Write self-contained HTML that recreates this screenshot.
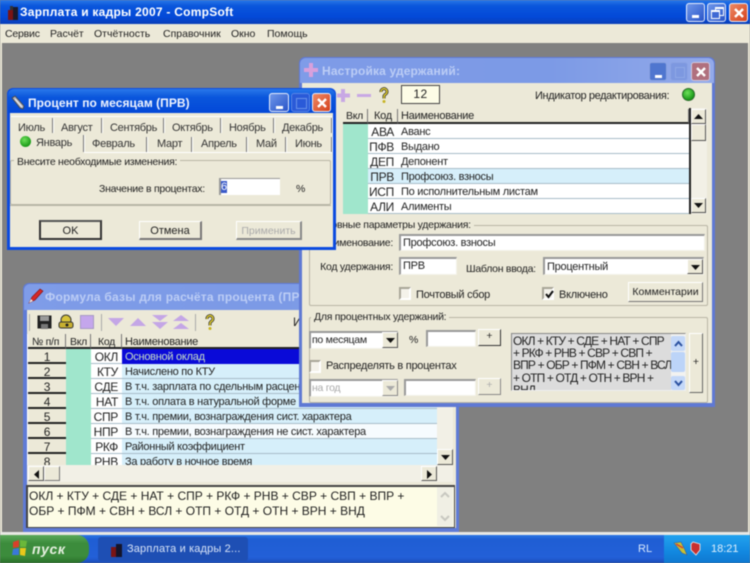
<!DOCTYPE html>
<html><head><meta charset="utf-8"><style>
html,body{margin:0;padding:0;background:#808080}
#r{position:relative;width:750px;height:563px;overflow:hidden;background:#808080;font:10.5px "Liberation Sans","DejaVu Sans",sans-serif;color:#222;filter:blur(.45px);letter-spacing:-.27px}
#r div,#r span.a,#r svg{position:absolute}
.t{white-space:nowrap;line-height:14px}
.m{letter-spacing:0}
.b{border:1px solid #fff;border-right-color:#777;border-bottom-color:#777;background:#ece9d8;box-sizing:border-box;text-align:center;white-space:nowrap;letter-spacing:0}
.i{background:#fff;box-sizing:border-box;border:1px solid #999;border-right-color:#f4f2e8;border-bottom-color:#f4f2e8;border-top-width:2px;border-left-width:2px;white-space:nowrap;padding-left:2px}
.g{border:1px solid #b8b5a5;border-radius:2px;box-sizing:border-box}
.l{background:#ece9d8;padding:0 3px;white-space:nowrap;line-height:13px}
.h{background:#ece9d8;border-right:1px solid #777;border-bottom:2px solid #222;box-sizing:border-box;line-height:15px;padding-left:3px;white-space:nowrap;overflow:hidden}
.c{box-sizing:border-box;border-bottom:1px solid #a8bcc8;line-height:16px;font-size:11px;white-space:nowrap;overflow:hidden}
.g3 .c,.g3 .h{line-height:17px}
.n{left:1px;width:38px;height:15px;background:#ece9d8;border-bottom:2px solid #222;text-align:center;font-size:12px}
.k{width:31px;height:15px;text-align:right;padding-right:4px;font-size:12px;background:#fff;letter-spacing:-.3px}
.tb{border-radius:3px;box-sizing:border-box;border:1px solid #e8eefc}
.cl{background:linear-gradient(135deg,#ee8a66,#d5421c)}
.mn{background:linear-gradient(135deg,#6f97ea,#2a55c8)}
.cli{background:#b0707e}.mni{background:#4f76cf}
.ck{width:12px;height:13px;background:#f4f2ea;border:2px solid #a8a598;border-right-color:#fff;border-bottom-color:#fff;box-sizing:border-box}
.tab{white-space:nowrap;line-height:14px;font-size:11px;color:#333}
.sp{width:1px;background:#777;border-right:1px solid #fff}
.f{font-size:12px;color:#222;white-space:nowrap;line-height:16px;letter-spacing:0}
</style></head><body><div id="r">

<!-- main chrome -->
<div style="left:0;top:0;width:750px;height:24px;background:linear-gradient(#2a78e8 0,#0a56dc 25%,#0349d8 70%,#0a3fb8 100%)"></div>
<div style="left:0;top:24px;width:750px;height:19px;background:#ece9d8"></div>
<div style="left:0;top:43px;width:2px;height:490px;background:#ece9d8"></div>
<div style="left:748px;top:43px;width:2px;height:490px;background:#ece9d8"></div>
<div style="left:0;top:532px;width:750px;height:3px;background:#e8e8e4"></div>

<svg style="left:5px;top:4px" width="16" height="17" viewBox="0 0 16 17"><rect x="3" y="6" width="5" height="10" fill="#7a1414"/><rect x="8" y="3" width="5" height="13" fill="#1a1a2a"/><rect x="5" y="2" width="3" height="4" fill="#333"/></svg>
<div class="t" style="left:20px;top:4px;font:bold 12px/16px 'Liberation Sans',sans-serif;color:#fff;letter-spacing:.25px">Зарплата и кадры 2007 - CompSoft</div>
<div class="t m" style="left:5px;top:27px;letter-spacing:-.2px">Сервис</div>
<div class="t m" style="left:50px;top:27px">Расчёт</div>
<div class="t m" style="left:94px;top:27px">Отчётность</div>
<div class="t m" style="left:163px;top:27px">Справочник</div>
<div class="t m" style="left:231px;top:27px">Окно</div>
<div class="t m" style="left:267px;top:27px">Помощь</div>
<div class="tb mn" style="left:686px;top:3px;width:19px;height:19px"><div style="left:5px;top:11px;width:7px;height:3px;background:#fff"></div></div>
<div class="tb mn" style="left:707px;top:3px;width:19px;height:19px"><div style="left:7px;top:3px;width:7px;height:6px;border:1px solid #fff;border-top-width:2px"></div><div style="left:3px;top:6px;width:7px;height:6px;border:1px solid #fff;border-top-width:2px;background:#3f69d4"></div></div>
<div class="tb cl" style="left:729px;top:3px;width:19px;height:19px"><svg style="left:3px;top:3px" width="12" height="12"><path d="M2 2L10 10M10 2L2 10" stroke="#fff" stroke-width="2.4"/></svg></div>

<!-- Формула window -->
<div style="left:23px;top:283px;width:436px;height:249px;background:#5f7bd6;border-radius:6px 6px 0 0"></div>
<div style="left:24px;top:284px;width:434px;height:26px;background:linear-gradient(90deg,#7f9ce8,#7c9ae6 60%,#93aaea);border-radius:6px 6px 0 0"></div>
<div style="left:27px;top:310px;width:429px;height:218px;background:#ece9d8"></div>
<svg style="left:27px;top:287px" width="17" height="18"><path d="M2 16L5 10L13 2L16 4L8 13Z" fill="#d62828" stroke="#7a1010" stroke-width=".6"/><path d="M2 16L4 12L6 14Z" fill="#eee"/></svg>
<div class="t" style="left:45px;top:290px;font:bold 12px/15px 'Liberation Sans',sans-serif;color:#bccdf5;letter-spacing:.22px">Формула базы для расчёта процента (ПРВ)</div>

<div style="left:29px;top:314px;width:1px;height:17px;background:#aaa"></div>
<svg style="left:37px;top:315px" width="15" height="14"><rect x=".5" y=".5" width="14" height="13" fill="#222"/><rect x="3" y="1" width="9" height="5" fill="#999"/><rect x="4" y="9" width="7" height="5" fill="#777"/></svg>
<svg style="left:58px;top:314px" width="16" height="16"><ellipse cx="8" cy="6" rx="5" ry="5" fill="#d8c43a" stroke="#333"/><rect x="1" y="8" width="14" height="6" rx="2" fill="#c8b030" stroke="#333"/><circle cx="9" cy="11" r="1.5" fill="#222"/></svg>
<div style="left:80px;top:315px;width:14px;height:14px;background:#c4a6ec;border:1px solid #a79ac4;box-sizing:border-box"></div>
<div style="left:101px;top:314px;width:1px;height:17px;background:#aaa"></div>
<svg style="left:108px;top:314px" width="84" height="16"><g fill="#c4a6e6"><path d="M0 4H16L8 12Z"/><path d="M22 12H38L30 4Z"/><path d="M44 1H60L52 7Z"/><path d="M44 8H60L52 15Z"/><path d="M65 15H81L73 9Z"/><path d="M65 7H81L73 1Z"/></g></svg>
<div style="left:195px;top:314px;width:1px;height:17px;background:#aaa"></div>
<svg style="left:204px;top:314px" width="12" height="17"><path d="M3 5A3 3 0 1 1 7 7.500L6 9V11.500" fill="none" stroke="#333" stroke-width="3"/><path d="M3 5A3 3 0 1 1 7 7.500L6 9V11.500" fill="none" stroke="#e0cc2a" stroke-width="1.500"/><circle cx="6" cy="14.500" r="1.500" fill="#c8b424"/></svg>
<div class="t" style="left:293px;top:315px;font-size:12px;color:#222">И</div>

<div class="g3" style="left:27px;top:334px;width:410px;height:131px;background:#fff;overflow:hidden">
 <div class="h" style="left:1px;top:0;width:38px;height:15px;padding-left:4px">№ п/п</div>
 <div class="h" style="left:39px;top:0;width:25px;height:15px;padding-left:4px">Вкл</div>
 <div class="h" style="left:64px;top:0;width:31px;height:15px;padding-left:7px">Код</div>
 <div class="h" style="left:95px;top:0;width:315px;height:15px;padding-left:3px;font-size:11px">Наименование</div>

 <div class="c n" style="top:15px">1</div>
 <div class="c n" style="top:30px">2</div>
 <div class="c n" style="top:45px">3</div>
 <div class="c n" style="top:60px">4</div>
 <div class="c n" style="top:75px">5</div>
 <div class="c n" style="top:90px">6</div>
 <div class="c n" style="top:105px">7</div>
 <div class="c n" style="top:120px;border:0">8</div>
 <div style="left:39px;top:15px;width:25px;height:116px;background:#a0e6cc"></div>

 <div class="c k" style="left:64px;top:15px">ОКЛ</div>
 <div class="c k" style="left:64px;top:30px">КТУ</div>
 <div class="c k" style="left:64px;top:45px">СДЕ</div>
 <div class="c k" style="left:64px;top:60px">НАТ</div>
 <div class="c k" style="left:64px;top:75px">СПР</div>
 <div class="c k" style="left:64px;top:90px">НПР</div>
 <div class="c k" style="left:64px;top:105px">РКФ</div>
 <div class="c k" style="left:64px;top:120px">РНВ</div>

 <div class="c" style="left:95px;top:15px;width:315px;height:15px;padding-left:3px;background:#0a0ad8;color:#c8e0c8;border:0">Основной оклад</div>
 <div class="c" style="left:95px;top:30px;width:315px;height:15px;padding-left:3px;background:#d6effa">Начислено по КТУ</div>
 <div class="c" style="left:95px;top:45px;width:315px;height:15px;padding-left:3px;background:#d6effa">В т.ч. зарплата по сдельным расценкам</div>
 <div class="c" style="left:95px;top:60px;width:315px;height:15px;padding-left:3px;background:#d6effa">В т.ч. оплата в натуральной форме</div>
 <div class="c" style="left:95px;top:75px;width:315px;height:15px;padding-left:3px;background:#d6effa">В т.ч. премии, вознаграждения сист. характера</div>
 <div class="c" style="left:95px;top:90px;width:315px;height:15px;padding-left:3px;background:#f6fbfe">В т.ч. премии, вознаграждения не сист. характера</div>
 <div class="c" style="left:95px;top:105px;width:315px;height:15px;padding-left:3px;background:#d6effa">Районный коэффициент</div>
 <div class="c" style="left:95px;top:120px;width:315px;height:15px;padding-left:3px;background:#d6effa">За работу в ночное время</div>
</div>
<div style="left:437px;top:334px;width:16px;height:131px;background:#f2f0e6"></div>
<div class="b" style="left:437px;top:449px;width:16px;height:16px;border-color:#fff #555 #555 #fff"><svg style="left:3px;top:5px" width="9" height="6"><path d="M0 0H9L4.500 5Z" fill="#111"/></svg></div>
<div style="left:27px;top:465px;width:426px;height:17px;background:#f2f0e6"></div>
<div class="b" style="left:28px;top:466px;width:16px;height:15px;border-color:#fff #555 #555 #fff"><svg style="left:5px;top:3px" width="6" height="9"><path d="M5 0V9L0 4.500Z" fill="#111"/></svg></div>
<div class="b" style="left:44px;top:466px;width:16px;height:15px"></div>
<div class="b" style="left:421px;top:466px;width:16px;height:15px;border-color:#fff #555 #555 #fff"><svg style="left:5px;top:3px" width="6" height="9"><path d="M0 0V9L5 4.500Z" fill="#111"/></svg></div>

<div style="left:26px;top:485px;width:429px;height:43px;background:#fdfce6;border:2px solid #444;border-right-width:1px;border-bottom-width:1px;box-sizing:border-box"></div>
<div class="f" style="left:29px;top:488px">ОКЛ + КТУ + СДЕ + НАТ + СПР + РКФ + РНВ + СВР + СВП + ВПР +</div>
<div class="f" style="left:29px;top:503px">ОБР + ПФМ + СВН + ВСЛ + ОТП + ОТД + ОТН + ВРН + ВНД</div>
<div style="left:437px;top:487px;width:16px;height:39px;background:#f0efe4"></div>
<svg style="left:439px;top:489px" width="12" height="35"><path d="M2 8L6 4L10 8" stroke="#c8c8c0" stroke-width="2" fill="none"/><path d="M2 27L6 31L10 27" stroke="#c8c8c0" stroke-width="2" fill="none"/></svg>

<!-- Настройка window -->
<div style="left:299px;top:57px;width:416px;height:350px;background:#5f79d4;border-radius:6px 6px 0 0"></div>
<div style="left:300px;top:58px;width:414px;height:25px;background:linear-gradient(90deg,#7f9ce8,#7c9ae6 60%,#93aaea);border-radius:6px 6px 0 0"></div>
<div style="left:302px;top:83px;width:410px;height:320px;background:#ece9d8"></div>
<svg style="left:304px;top:63px" width="14" height="14"><path d="M5 0H9V5H14V9H9V14H5V9H0V5H5Z" fill="#d8a0dc"/></svg>
<div class="t" style="left:322px;top:64px;font:bold 12px/15px 'Liberation Sans',sans-serif;color:#bccdf5;letter-spacing:.15px">Настройка удержаний:</div>
<div class="tb mni" style="left:649px;top:62px;width:18px;height:19px;border-color:#8aa2e0"><div style="left:5px;top:12px;width:7px;height:3px;background:#fff"></div></div>
<div class="tb" style="left:670px;top:62px;width:18px;height:19px;border-color:#8ca4e4;background:#7d98e0"><div style="left:4px;top:4px;width:8px;height:9px;border:1px solid #8fa8e6"></div></div>
<div class="tb cli" style="left:691px;top:62px;width:19px;height:19px;border-color:#d0c8dc"><svg style="left:3px;top:3px" width="12" height="12"><path d="M2 2L10 10M10 2L2 10" stroke="#fff" stroke-width="2.400"/></svg></div>

<svg style="left:337px;top:89px" width="36" height="13"><path d="M4 0H8V4.500H13V8.500H8V13H4V8.500H0V4.500H4Z" fill="#c8a8e4"/><rect x="20" y="5" width="14" height="3" fill="#c8a8e4"/></svg>
<svg style="left:378px;top:87px" width="12" height="17"><path d="M3 5A3 3 0 1 1 7 7.500L6 9V11.500" fill="none" stroke="#333" stroke-width="3"/><path d="M3 5A3 3 0 1 1 7 7.500L6 9V11.500" fill="none" stroke="#e0cc2a" stroke-width="1.500"/><circle cx="6" cy="14.500" r="1.500" fill="#c8b424"/></svg>
<div style="left:401px;top:85px;width:39px;height:19px;background:#fdfce6;border:1px solid #444;box-sizing:border-box;text-align:center;font-size:12px;line-height:17px;letter-spacing:.5px">12</div>
<div class="t" style="left:535px;top:89px;font-size:11px;letter-spacing:-.38px">Индикатор редактирования:</div>
<div style="left:682px;top:88px;width:13px;height:13px;border-radius:50%;background:radial-gradient(circle at 40% 35%,#6ee05a,#1a9a18 70%);border:1px solid #2a6a2a;box-sizing:border-box"></div>

<div class="h" style="left:343px;top:109px;width:25px;height:15px">Вкл</div>
<div class="h" style="left:368px;top:109px;width:30px;height:15px;padding-left:6px;font-size:11px">Код</div>
<div class="h" style="left:398px;top:109px;width:291px;height:15px;font-size:11px">Наименование</div>
<div style="left:343px;top:124px;width:25px;height:90px;background:#a0e6cc"></div>
<div class="c k" style="left:368px;top:124px;width:30px">АВА</div>
<div class="c k" style="left:368px;top:139px;width:30px">ПФВ</div>
<div class="c k" style="left:368px;top:154px;width:30px">ДЕП</div>
<div class="c k" style="left:368px;top:169px;width:30px;background:#d6effa">ПРВ</div>
<div class="c k" style="left:368px;top:184px;width:30px">ИСП</div>
<div class="c k" style="left:368px;top:199px;width:30px">АЛИ</div>
<div class="c" style="left:398px;top:124px;width:291px;height:15px;padding-left:3px;background:#fff">Аванс</div>
<div class="c" style="left:398px;top:139px;width:291px;height:15px;padding-left:3px;background:#fff">Выдано</div>
<div class="c" style="left:398px;top:154px;width:291px;height:15px;padding-left:3px;background:#fff">Депонент</div>
<div class="c" style="left:398px;top:169px;width:291px;height:15px;padding-left:3px;background:#d6effa">Профсоюз. взносы</div>
<div class="c" style="left:398px;top:184px;width:291px;height:15px;padding-left:3px;background:#fff">По исполнительным листам</div>
<div class="c" style="left:398px;top:199px;width:291px;height:15px;padding-left:3px;background:#fff">Алименты</div>
<div style="left:689px;top:108px;width:2px;height:106px;background:#222"></div>
<div style="left:691px;top:108px;width:16px;height:106px;background:#f2f0e6"></div>
<div class="b" style="left:691px;top:109px;width:15px;height:15px;border-color:#fff #555 #555 #fff"><svg style="left:2px;top:4px" width="9" height="6"><path d="M0 5H9L4.500 0Z" fill="#111"/></svg></div>
<div class="b" style="left:691px;top:124px;width:15px;height:17px;border-color:#fff #555 #555 #fff"></div>
<div class="b" style="left:691px;top:198px;width:15px;height:15px;border-color:#fff #555 #555 #fff"><svg style="left:2px;top:4px" width="9" height="6"><path d="M0 0H9L4.500 5Z" fill="#111"/></svg></div>

<div class="g" style="left:309px;top:225px;width:399px;height:81px"></div>
<div class="l" style="left:310px;top:219px">Основные параметры удержания:</div>
<div class="t" style="left:300px;top:236px;width:93px;text-align:right">Наименование:</div>
<div class="i" style="left:399px;top:234px;width:306px;height:17px;line-height:15px;font-size:11px">Профсоюз. взносы</div>
<div class="t" style="left:300px;top:260px;width:93px;text-align:right">Код удержания:</div>
<div class="i" style="left:399px;top:257px;width:58px;height:18px;line-height:15px;font-size:11px">ПРВ</div>
<div class="t" style="left:466px;top:262px">Шаблон ввода:</div>
<div class="i" style="left:543px;top:257px;width:161px;height:18px;line-height:16px;font-size:11px">Процентный</div>
<div class="b" style="left:687px;top:259px;width:16px;height:15px;border-color:#fff #555 #555 #fff"><svg style="left:3px;top:5px" width="9" height="6"><path d="M0 0H9L4.500 5Z" fill="#111"/></svg></div>
<div class="ck" style="left:399px;top:287px"></div>
<div class="t" style="left:416px;top:288px;font-size:11px">Почтовый сбор</div>
<div class="ck" style="left:542px;top:287px"><svg style="left:1px;top:1px" width="9" height="9"><path d="M1 4L3.500 7L8 1" stroke="#111" stroke-width="2" fill="none"/></svg></div>
<div class="t" style="left:559px;top:288px;font-size:11px">Включено</div>
<div class="b" style="left:628px;top:282px;width:75px;height:20px;line-height:19px;font-size:10.5px">Комментарии</div>

<div class="g" style="left:309px;top:317px;width:399px;height:86px"></div>
<div class="l" style="left:311px;top:311px">Для процентных удержаний:</div>
<div class="i" style="left:309px;top:331px;width:89px;height:18px;line-height:14px;padding-left:1px">по месяцам</div>
<div class="b" style="left:382px;top:332px;width:16px;height:16px;border-color:#fff #555 #555 #fff"><svg style="left:3px;top:5px" width="9" height="6"><path d="M0 0H9L4.500 5Z" fill="#111"/></svg></div>
<div class="t" style="left:409px;top:333px">%</div>
<div class="i" style="left:426px;top:330px;width:50px;height:17px"></div>
<div class="b" style="left:478px;top:329px;width:23px;height:17px;border-color:#fff #333 #333 #fff;line-height:13px">+</div>
<div class="ck" style="left:309px;top:360px"></div>
<div class="t" style="left:326px;top:359px;font-size:11px">Распределять в процентах</div>
<div class="i" style="left:309px;top:379px;width:89px;height:18px;color:#aaa;line-height:14px;padding-left:1px">на год</div>
<div class="b" style="left:382px;top:380px;width:16px;height:16px;border-color:#fff #888 #888 #fff"><svg style="left:3px;top:5px" width="9" height="6"><path d="M0 0H9L4.500 5Z" fill="#aaa"/></svg></div>
<div class="i" style="left:404px;top:379px;width:72px;height:17px"></div>
<div class="b" style="left:478px;top:378px;width:23px;height:17px;border-color:#fff #888 #888 #fff;line-height:13px;color:#aaa">+</div>

<div style="left:511px;top:333px;width:175px;height:58px;background:#dcdcdc;border:1px solid #888;border-right-color:#eee;border-bottom-color:#eee;box-sizing:border-box;overflow:hidden">
 <div class="t" style="left:1px;top:1px;font-size:12px;line-height:12.2px;letter-spacing:-.85px">ОКЛ + КТУ + СДЕ + НАТ + СПР<br>+ РКФ + РНВ + СВР + СВП +<br>ВПР + ОБР + ПФМ + СВН + ВСЛ<br>+ ОТП + ОТД + ОТН + ВРН +<br>ВНД</div>
 <div style="left:159px;top:0;width:15px;height:57px;background:#f2f2f0"></div>
 <div style="left:159px;top:2px;width:14px;height:15px;background:#c4d8f8;border-radius:2px"></div>
 <svg style="left:162px;top:6px" width="9" height="7"><path d="M1 6L4.500 2L8 6" stroke="#2a50a0" stroke-width="2" fill="none"/></svg>
 <div style="left:159px;top:18px;width:14px;height:20px;background:#bcd4f8;border-radius:2px"></div>
 <div style="left:159px;top:42px;width:14px;height:14px;background:#c4d8f8;border-radius:2px"></div>
 <svg style="left:162px;top:46px" width="9" height="7"><path d="M1 1L4.500 5L8 1" stroke="#2a50a0" stroke-width="2" fill="none"/></svg>
</div>
<div class="b" style="left:689px;top:333px;width:14px;height:60px;line-height:56px;border-color:#fff #666 #666 #fff">+</div>

<!-- Процент window -->
<div style="left:7px;top:88px;width:329px;height:162px;background:#0b4be0;border-radius:6px 6px 0 0"></div>
<div style="left:8px;top:89px;width:327px;height:24px;background:linear-gradient(#2a78ea,#0a56dc 35%,#0348d8);border-radius:6px 6px 0 0"></div>
<div style="left:10px;top:113px;width:323px;height:134px;background:#ece9d8"></div>
<svg style="left:10px;top:95px" width="16" height="16"><path d="M2 3L5 1L14 11L13 14L10 13Z" fill="#b0b0b8" stroke="#444" stroke-width=".8"/><path d="M5 4L12 12" stroke="#eee"/></svg>
<div class="t" style="left:28px;top:96px;font:bold 12px/15px 'Liberation Sans',sans-serif;color:#f0f4ff;letter-spacing:.05px">Процент по месяцам (ПРВ)</div>
<div class="tb mn" style="left:269px;top:93px;width:20px;height:19px"><div style="left:6px;top:12px;width:7px;height:3px;background:#fff"></div></div>
<div class="tb" style="left:291px;top:93px;width:19px;height:19px;background:#2a5ad8;border-color:#5a86e6"><div style="left:4px;top:4px;width:9px;height:9px;border:1px solid #6a92ea"></div></div>
<div class="tb cl" style="left:312px;top:93px;width:19px;height:19px"><svg style="left:3px;top:3px" width="12" height="12"><path d="M2 2L10 10M10 2L2 10" stroke="#fff" stroke-width="2.400"/></svg></div>

<div style="left:11px;top:116px;width:321px;height:1px;background:#fff"></div>
<div class="tab" style="left:18px;top:121px">Июль</div><div class="sp" style="left:52px;top:118px;height:15px"></div>
<div class="tab" style="left:61px;top:121px">Август</div><div class="sp" style="left:101px;top:118px;height:15px"></div>
<div class="tab" style="left:110px;top:121px">Сентябрь</div><div class="sp" style="left:163px;top:118px;height:15px"></div>
<div class="tab" style="left:172px;top:121px">Октябрь</div><div class="sp" style="left:220px;top:118px;height:15px"></div>
<div class="tab" style="left:229px;top:121px">Ноябрь</div><div class="sp" style="left:273px;top:118px;height:15px"></div>
<div class="tab" style="left:282px;top:121px">Декабрь</div><div class="sp" style="left:331px;top:118px;height:15px"></div>

<div style="left:20px;top:136px;width:11px;height:11px;border-radius:50%;background:radial-gradient(circle at 40% 35%,#6ee05a,#1a9a18 70%)"></div>
<div class="tab" style="left:36px;top:136px">Январь</div><div class="sp" style="left:83px;top:135px;height:17px"></div>
<div class="tab" style="left:92px;top:137px">Февраль</div><div class="sp" style="left:146px;top:137px;height:15px"></div>
<div class="tab" style="left:157px;top:137px">Март</div><div class="sp" style="left:191px;top:137px;height:15px"></div>
<div class="tab" style="left:201px;top:137px">Апрель</div><div class="sp" style="left:246px;top:137px;height:15px"></div>
<div class="tab" style="left:256px;top:137px">Май</div><div class="sp" style="left:285px;top:137px;height:15px"></div>
<div class="tab" style="left:295px;top:137px">Июнь</div><div class="sp" style="left:331px;top:137px;height:15px"></div>
<div style="left:84px;top:152px;width:248px;height:1px;background:#fff"></div>

<div class="g" style="left:10px;top:160px;width:321px;height:45px"></div>
<div class="l" style="left:14px;top:156px">Внесите необходимые изменения:</div>
<div class="t" style="left:99px;top:182px">Значение в процентах:</div>
<div style="left:219px;top:178px;width:61px;height:17px;background:#fff;border-left:2px solid #999;border-top:1px solid #999;box-sizing:border-box"></div>
<div style="left:221px;top:181px;width:6px;height:12px;background:#3a5ac8;color:#fff;font-size:11px;line-height:12px">6</div>
<div class="t" style="left:296px;top:182px">%</div>
<div style="left:10px;top:205px;width:321px;height:1px;background:#b8b5a5"></div>
<div class="b" style="left:39px;top:220px;width:63px;height:20px;border:2px solid #333;border-top-color:#555;line-height:18px;font-size:11px">OK</div>
<div class="b" style="left:139px;top:221px;width:63px;height:19px;line-height:18px;font-size:11px;border-bottom:2px solid #777;border-right:2px solid #777">Отмена</div>
<div class="b" style="left:236px;top:221px;width:66px;height:19px;line-height:18px;font-size:10.5px;color:#aaa;border-bottom:2px solid #888;border-right:2px solid #888">Применить</div>

<!-- Taskbar -->
<div style="left:0;top:535px;width:750px;height:28px;background:linear-gradient(#2a76e4,#1f5ed4 15%,#2360d8 80%,#1a4cb8)"></div>
<div style="left:0;top:535px;width:89px;height:28px;background:linear-gradient(#5aa85a,#3c8c3c 30%,#3c8c3c 75%,#2a702a);border-radius:0 12px 12px 0"></div>
<svg style="left:11px;top:539px" width="17" height="18"><path d="M2 3L8 1V8L2 9Z" fill="#d8402a"/><path d="M9 1L16 2L15 8L9 8Z" fill="#6ab83a"/><path d="M2 10L8 9V16L1 16Z" fill="#3a78d8"/><path d="M9 9L15 9L14 17L9 16Z" fill="#e8c81a"/></svg>
<div class="t" style="left:32px;top:541px;font:italic bold 14px/17px 'Liberation Sans',sans-serif;color:#e6f0e0;letter-spacing:.6px">пуск</div>
<div style="left:98px;top:537px;width:150px;height:24px;background:#1e4fb4;border-radius:3px"></div>
<svg style="left:109px;top:541px" width="16" height="17" viewBox="0 0 16 17"><rect x="2" y="6" width="5" height="10" fill="#7a1414"/><rect x="7" y="3" width="6" height="13" fill="#14142a"/></svg>
<div class="t" style="left:127px;top:542px;font-size:11px;color:#d8e4f8;letter-spacing:.15px">Зарплата и кадры 2...</div>
<div class="t" style="left:638px;top:542px;font-size:11px;color:#d8e8fc;letter-spacing:0">RL</div>
<div style="left:664px;top:535px;width:86px;height:28px;background:linear-gradient(#22a2ee,#1288e0 60%,#0f78d0)"></div>
<svg style="left:673px;top:541px" width="30" height="16"><path d="M1 2L8 1L12 9L14 14L9 12Z" fill="#c8c030" stroke="#3a5a9a" stroke-width=".6"/><path d="M3 3L10 7" stroke="#d84030" stroke-width="1.500"/><path d="M20 1L27 3V9L23 14L18 9V3Z" fill="#c83030" stroke="#eee" stroke-width=".8"/></svg>
<div class="t" style="left:711px;top:542px;font-size:11px;color:#dff0fc;letter-spacing:0">18:21</div>

</div></body></html>
